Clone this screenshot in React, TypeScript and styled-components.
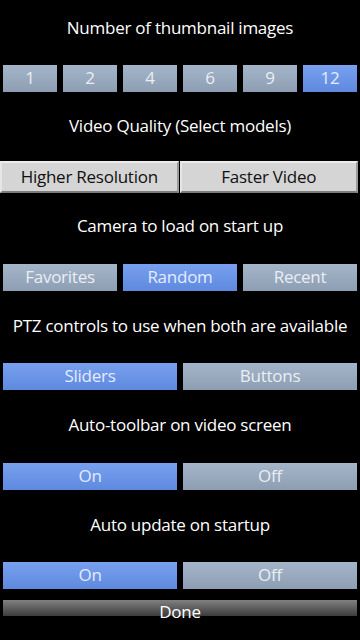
import React from "react";
import styled, { createGlobalStyle } from "styled-components";

const Global = createGlobalStyle`
  html, body { margin: 0; padding: 0; background: #000; }
  body { font-family: "Open Sans", Lato, "DejaVu Sans", sans-serif; letter-spacing: -0.25px; }
`;

const Page = styled.div`
  width: 360px;
  height: 640px;
  background: #000;
  display: flex;
  flex-direction: column;
  overflow: hidden;
`;

const Title = styled.div<{ $top?: number; $bottom?: number }>`
  margin-top: ${(p) => p.$top ?? 23}px;
  margin-bottom: ${(p) => p.$bottom ?? 25}px;
  height: 24px;
  line-height: 24px;
  font-size: 17px;
  color: #fff;
  text-align: center;
  white-space: nowrap;
`;

const Row = styled.div`
  display: flex;
  gap: 6px;
  padding: 0 3px;
`;

const Choice = styled.div<{ $on?: boolean }>`
  flex: 1;
  height: 27px;
  line-height: 26px;
  font-size: 17px;
  text-align: center;
  color: ${(p) => (p.$on ? "#e4ecfd" : "#e9eef4")};
  background: ${(p) =>
    p.$on
      ? "linear-gradient(#77a0ef, #5f89de)"
      : "linear-gradient(#a5b5c9, #8d9eb3)"};
`;

const SegRow = styled.div`
  display: flex;
  gap: 1px;
  padding-right: 2px;
`;

const Seg = styled.div`
  flex: 1;
  height: 28px;
  line-height: 27px;
  font-size: 17px;
  text-align: center;
  color: #111;
  background: #d5d5d5;
  border-top: 2px solid #ececec;
  border-left: 2px solid #e6e6e6;
  border-bottom: 2px solid #7c7c7c;
  border-right: 2px solid #9a9a9a;
`;

const Done = styled.div`
  margin: 11px 3px 0;
  height: 16px;
  line-height: 24px;
  font-size: 17px;
  text-align: center;
  color: #fff;
  overflow: visible;
  background: linear-gradient(#808080, #3c3c3c);
`;

const thumbs = ["1", "2", "4", "6", "9", "12"];

export default function App() {
  return (
    <Page>
      <Global />
      <Title $top={16}>Number of thumbnail images</Title>
      <Row>
        {thumbs.map((t) => (
          <Choice key={t} $on={t === "12"}>
            {t}
          </Choice>
        ))}
      </Row>
      <Title $top={22} $bottom={23}>Video Quality (Select models)</Title>
      <SegRow>
        <Seg>Higher Resolution</Seg>
        <Seg>Faster Video</Seg>
      </SegRow>
      <Title $top={21} $bottom={26}>Camera to load on start up</Title>
      <Row>
        <Choice>Favorites</Choice>
        <Choice $on>Random</Choice>
        <Choice>Recent</Choice>
      </Row>
      <Title>PTZ controls to use when both are available</Title>
      <Row>
        <Choice $on>Sliders</Choice>
        <Choice>Buttons</Choice>
      </Row>
      <Title $bottom={26}>Auto-toolbar on video screen</Title>
      <Row>
        <Choice $on>On</Choice>
        <Choice>Off</Choice>
      </Row>
      <Title>Auto update on startup</Title>
      <Row>
        <Choice $on>On</Choice>
        <Choice>Off</Choice>
      </Row>
      <Done>Done</Done>
    </Page>
  );
}
